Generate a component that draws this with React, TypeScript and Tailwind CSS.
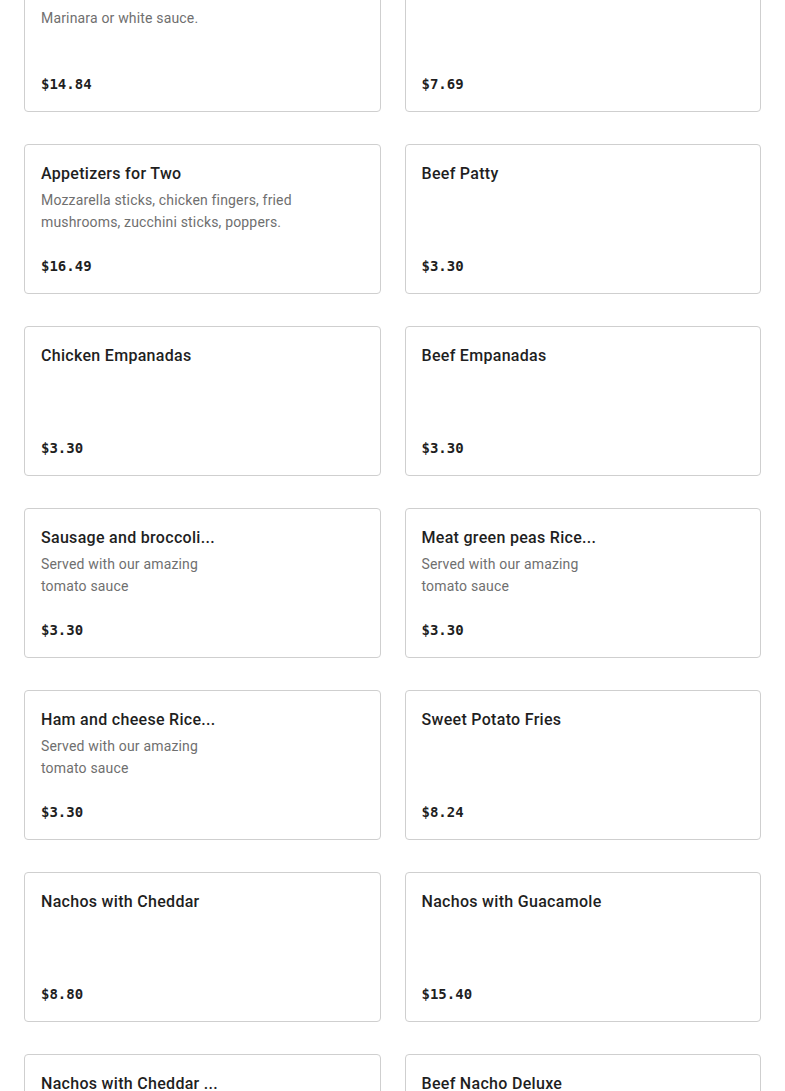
type MenuItem = {
  name: string;
  description?: string[];
  price: string;
};

const items: MenuItem[] = [
  { name: "Fried Calamari", description: ["Marinara or white sauce."], price: "$14.84" },
  { name: "Chicken Wings", price: "$7.69" },
  {
    name: "Appetizers for Two",
    description: ["Mozzarella sticks, chicken fingers, fried", "mushrooms, zucchini sticks, poppers."],
    price: "$16.49",
  },
  { name: "Beef Patty", price: "$3.30" },
  { name: "Chicken Empanadas", price: "$3.30" },
  { name: "Beef Empanadas", price: "$3.30" },
  {
    name: "Sausage and broccoli...",
    description: ["Served with our amazing", "tomato sauce"],
    price: "$3.30",
  },
  {
    name: "Meat green peas Rice...",
    description: ["Served with our amazing", "tomato sauce"],
    price: "$3.30",
  },
  {
    name: "Ham and cheese Rice...",
    description: ["Served with our amazing", "tomato sauce"],
    price: "$3.30",
  },
  { name: "Sweet Potato Fries", price: "$8.24" },
  { name: "Nachos with Cheddar", price: "$8.80" },
  { name: "Nachos with Guacamole", price: "$15.40" },
  { name: "Nachos with Cheddar ...", price: "$9.35" },
  { name: "Beef Nacho Deluxe", price: "$12.10" },
];

const MenuCard = ({ item }: { item: MenuItem }) => (
  <div className="flex h-[150px] flex-col rounded border border-[#cfcfcf] bg-white px-4 pb-[17px] pt-[17px]">
    <h3 className="text-[16px] font-medium leading-6 tracking-[0.3px] text-[#1f1f1f]">{item.name}</h3>
    {item.description && (
      <p className="mt-[3px] text-[14px] leading-[22px] tracking-[0.17px] text-[#6f6f6f]">
        {item.description.map((line, i) => (
          <span key={i} className="block">
            {line}
          </span>
        ))}
      </p>
    )}
    <div className="mt-auto font-['DejaVu_Sans_Mono',monospace] text-[14px] font-bold leading-5 text-[#1f1f1f]">
      {item.price}
    </div>
  </div>
);

export default function App() {
  return (
    <div className="h-[1091px] overflow-hidden bg-white font-['Roboto',sans-serif]">
      <div className="-mt-[38px] grid grid-cols-2 gap-x-6 gap-y-8 px-6">
        {items.map((item) => (
          <MenuCard key={item.name + item.price} item={item} />
        ))}
      </div>
    </div>
  );
}
